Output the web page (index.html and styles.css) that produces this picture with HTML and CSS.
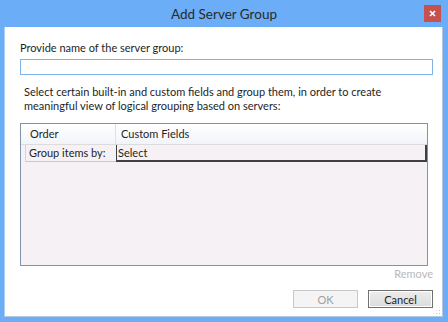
FILE: index.html
```html
<!DOCTYPE html>
<html>
<head>
  <meta charset="UTF-8" />
  <title>Add Server Group</title>
  <link rel="stylesheet" href="styles.css">
</head>
<body>
  <div class="window">
    <div class="titlebar">
      <span class="title">Add Server Group</span>
      <button class="close-btn" title="Close">
        <svg width="7" height="7" viewBox="0 0 7 7"><path d="M1 1L6 6M6 1L1 6" stroke="#fff" stroke-width="1.6"/></svg>
      </button>
    </div>

    <div class="client">
      <label class="label" for="groupName">Provide name of the server group:</label>
      <input class="name-input" id="groupName" type="text" />

      <p class="hint">Select certain built-in and custom fields and group them, in order to create<br>meaningful view of logical grouping based on servers:</p>

      <div class="grid">
        <div class="grid-head">
          <div class="cell col-order">Order</div>
          <div class="cell col-fields">Custom Fields</div>
        </div>
        <div class="grid-row">
          <div class="cell col-order">Group items by:</div>
          <div class="cell col-fields selected">Select</div>
        </div>
      </div>

      <div class="remove-row"><span class="remove">Remove</span></div>

      <div class="buttons">
        <button class="btn" disabled>OK</button>
        <button class="btn default">Cancel</button>
      </div>
      <div class="grip"></div>
    </div>
  </div>
</body>
</html>
```

FILE: styles.css
```css
body {
  margin: 0;
  background: #6badf6;
  font-family: "Segoe UI", Lato, "Noto Sans", sans-serif;
  font-size: 11px;
  color: #1e1e1e;
}

.window {
  width: 448px;
  height: 322px;
  display: flex;
  flex-direction: column;
}

.titlebar {
  height: 26px;
  position: relative;
  display: flex;
  align-items: center;
  justify-content: center;
}

.title {
  font-size: 13.5px;
  color: #2a2a2a;
  margin-top: 1px;
}

.close-btn {
  position: absolute;
  top: 5px;
  right: 7px;
  width: 17px;
  height: 17px;
  padding: 0;
  border: none;
  background: #c75050;
  display: flex;
  align-items: center;
  justify-content: center;
}

.client {
  position: relative;
  margin: 1px 5px 5px 4px;
  flex: 1;
  background: #fff;
  border-left: 1px solid #a9cdf5;
  border-right: 1px solid #b8c7d9;
  border-bottom: 1px solid #b8c7d9;
  padding: 14px 9px 0 15px;
  display: flex;
  flex-direction: column;
}

.label {
  line-height: 14px;
  height: 14px;
}

.name-input {
  margin: 4px 0 0 0;
  width: 413px;
  height: 16px;
  box-sizing: border-box;
  border: 1px solid #7eb4ea;
  padding: 0 3px;
  font: inherit;
  outline: none;
}

.hint {
  margin: 10px 0 0 4px;
  line-height: 14px;
  white-space: nowrap;
}

.grid {
  margin-top: 10px;
  width: 408px;
  height: 143px;
  box-sizing: border-box;
  border: 1px solid #7e94ab;
  background: #f5f1f5;
}

.grid-head {
  display: flex;
  height: 20px;
  background: linear-gradient(#ffffff, #f2f4f9);
  border-bottom: 1px solid #dcdcdc;
}

.grid-row {
  display: flex;
  height: 17px;
  margin-left: 4px;
  border-left: 1px solid #bcd8f3;
}

.cell {
  display: flex;
  align-items: center;
  line-height: 14px;
  white-space: nowrap;
}

.grid-head .col-order {
  width: 85px;
  padding-left: 9px;
  border-right: 1px solid #e0e0e0;
}

.grid-head .col-fields {
  padding-left: 5px;
}

.grid-row .col-order {
  width: 87px;
  padding-left: 3px;
  border-bottom: 1px solid #c9c9c9;
}

.grid-row .selected {
  flex: 1;
  border-left: 1px solid #404040;
  border-right: 2px solid #404040;
  border-bottom: 2px solid #404040;
  padding-left: 1px;
}

.remove-row {
  display: flex;
  justify-content: flex-end;
  margin-top: 1px;
  width: 413px;
}

.remove {
  color: #b9b9b9;
  line-height: 14px;
}

.buttons {
  display: flex;
  justify-content: flex-end;
  gap: 10px;
  margin-top: 9px;
  width: 413px;
}

.btn {
  width: 65px;
  height: 18px;
  padding: 0;
  font: inherit;
  color: #1e1e1e;
  border: 1px solid #acacac;
  background: linear-gradient(#f0f0f0, #e5e5e5);
}

.btn:disabled {
  color: #a0a0a0;
  border-color: #c8c8c8;
  background: #f4f4f4;
}

.btn.default {
  border: 1px solid #707070;
  box-shadow: inset 0 0 0 1px #fff;
  background: linear-gradient(#ececec, #dcdcdc);
}

.grip {
  position: absolute;
  right: 1px;
  bottom: 1px;
  width: 9px;
  height: 9px;
  background:
    radial-gradient(circle, #c4c4c4 0.8px, transparent 1px) 0 0 / 3px 3px;
  clip-path: polygon(100% 0, 100% 100%, 0 100%);
}
```
